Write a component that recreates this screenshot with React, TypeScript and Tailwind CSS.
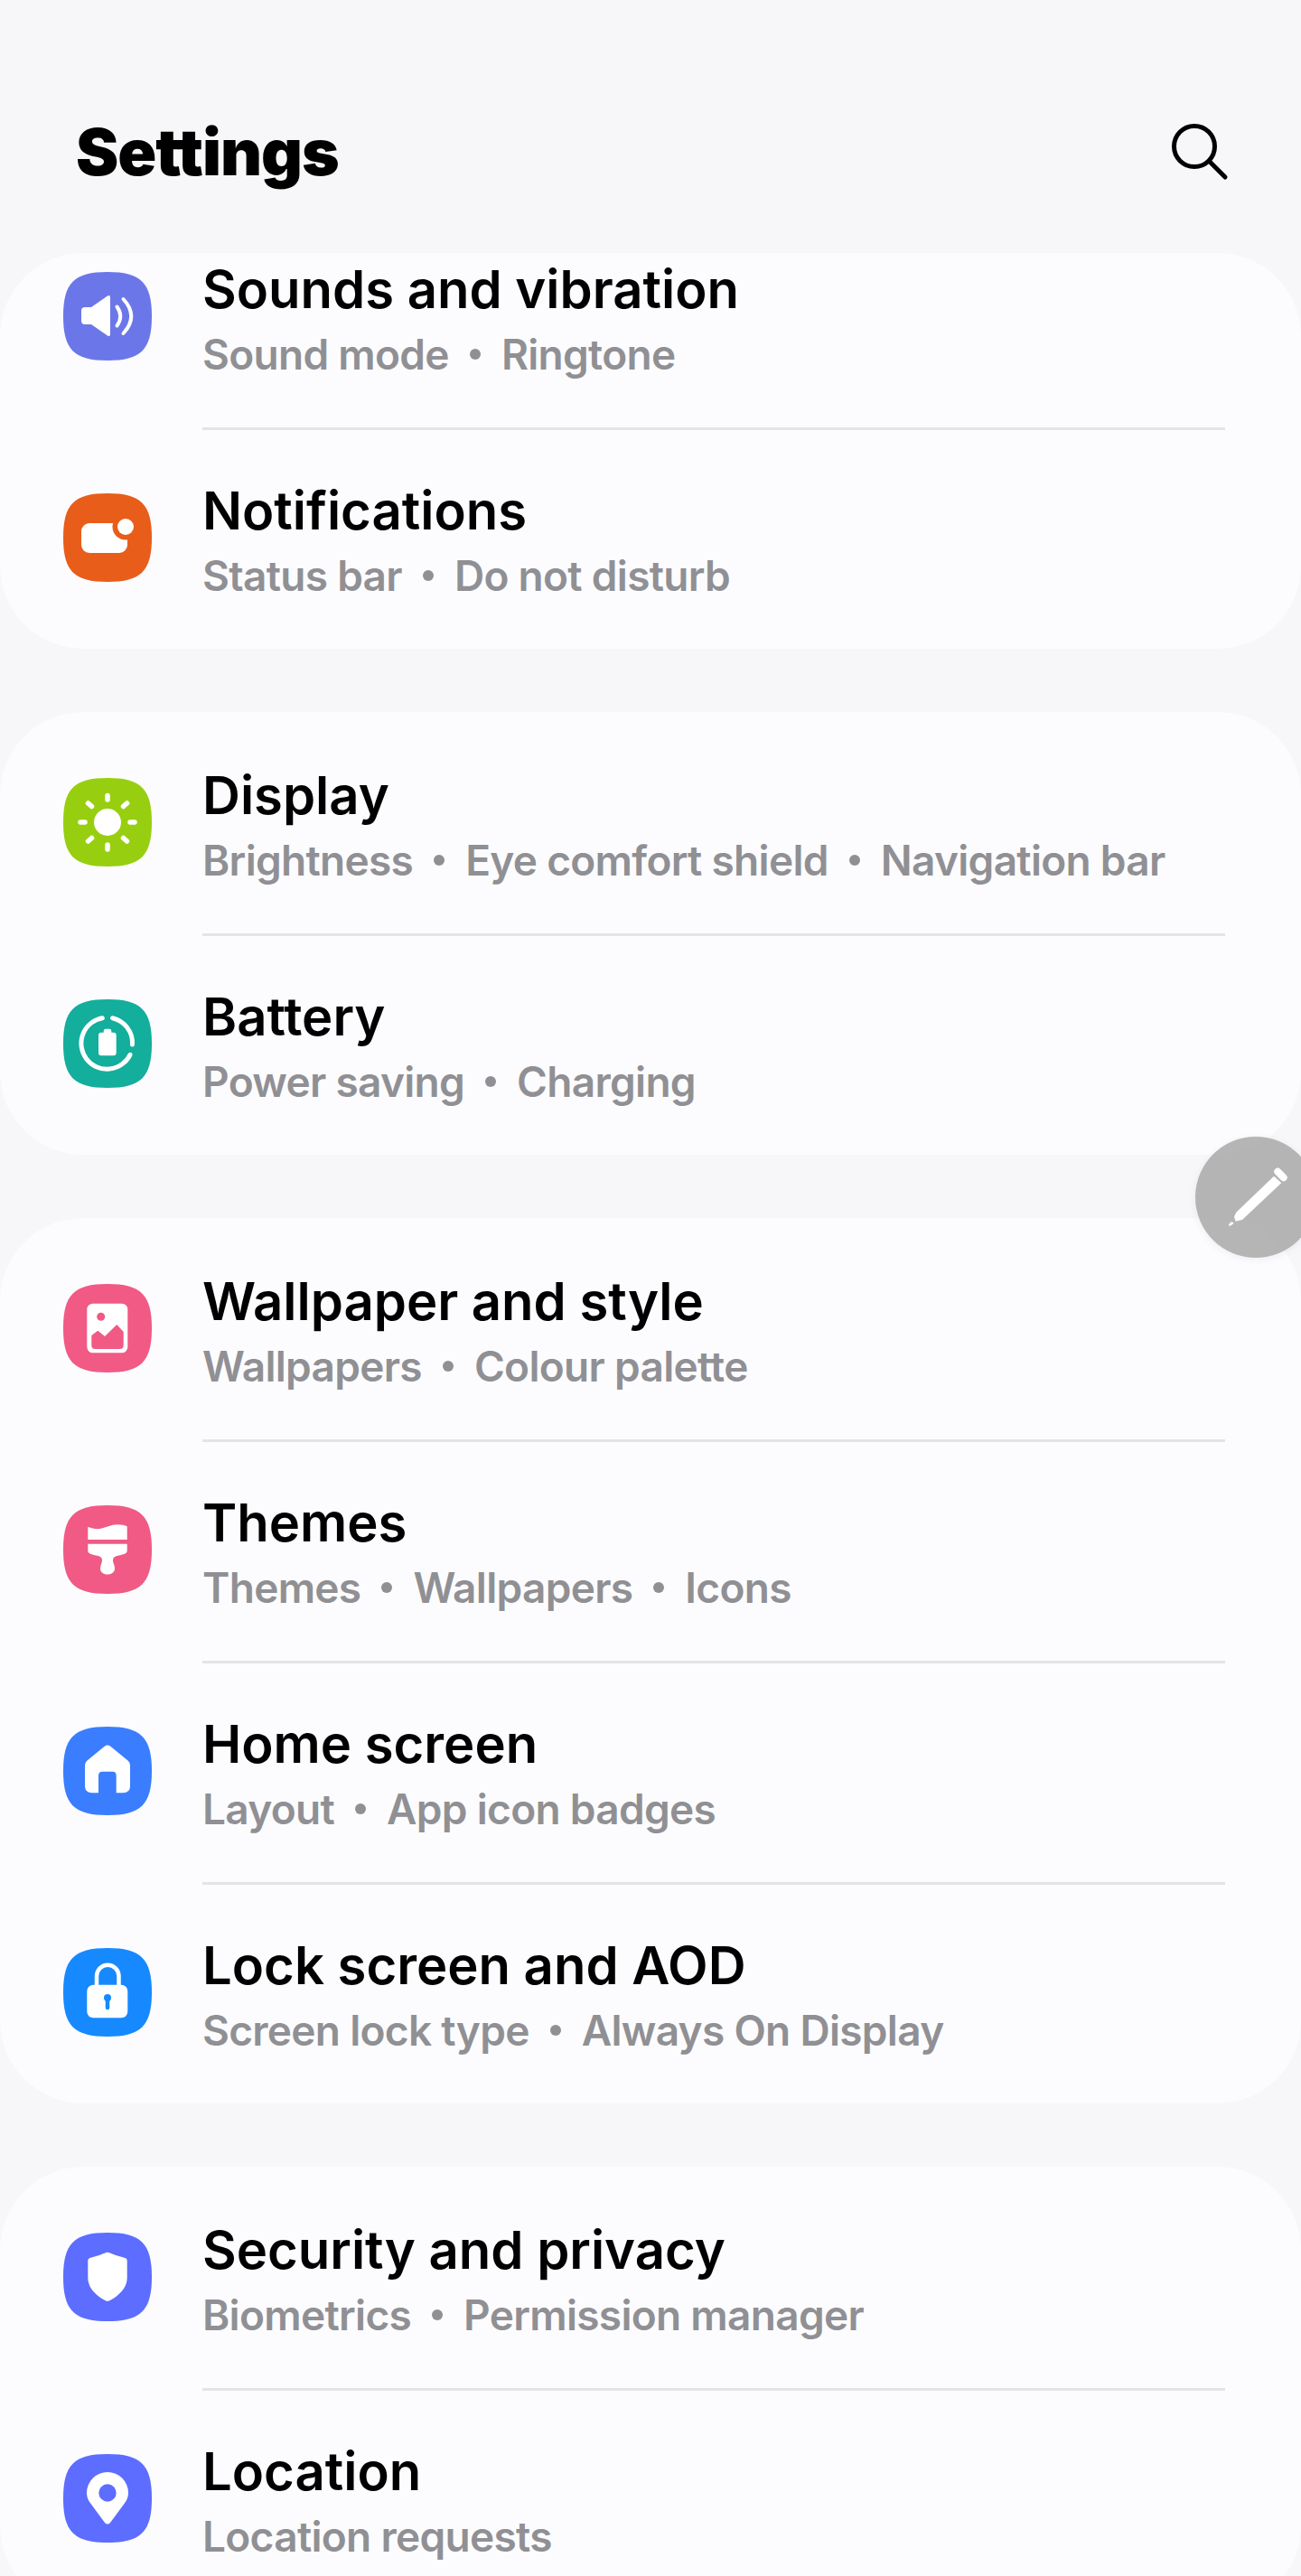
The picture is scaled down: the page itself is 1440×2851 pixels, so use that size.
import type { ReactNode } from 'react';

type Item = { title: string; sub: string[]; color: string; icon: ReactNode };

const Squircle = 'M49 0C86 0 98 12 98 49C98 86 86 98 49 98C12 98 0 86 0 49C0 12 12 0 49 0Z';

const sounds: Item = {
  title: 'Sounds and vibration',
  sub: ['Sound mode', 'Ringtone'],
  color: '#6b77e8',
  icon: (
    <>
      <path d="M24 39H31L49 26.500Q52 25 52 28V69Q52 72 49 70.500L31 58H24Q20 58 20 54V43Q20 39 24 39Z" fill="#fff" />
      <path d="M59.500 38.500Q67 49 59.500 59.500M66.500 30Q84 49 66.500 68" stroke="#fff" strokeWidth="4" strokeLinecap="round" fill="none" />
    </>
  ),
};

const notifications: Item = {
  title: 'Notifications',
  sub: ['Status bar', 'Do not disturb'],
  color: '#e85d19',
  icon: (
    <>
      <rect x="20" y="33" width="51" height="33" rx="9" fill="#fff" />
      <circle cx="69" cy="37" r="14.500" fill="#e85d19" />
      <circle cx="69" cy="37" r="9" fill="#fff" />
    </>
  ),
};

const display: Item = {
  title: 'Display',
  sub: ['Brightness', 'Eye comfort shield', 'Navigation bar'],
  color: '#97cf10',
  icon: (
    <>
      <circle cx="49" cy="49" r="15" fill="#fff" />
      <path
        d="M49 19.500V24M49 74V79M19 49H24M74 49H79M27.500 28L31.500 31.500M70.500 28L66.500 31.500M27.500 70L31.500 66.500M70.500 70L66.500 66.500"
        stroke="#fff"
        strokeWidth="5.500"
        strokeLinecap="round"
        fill="none"
      />
    </>
  ),
};

const battery: Item = {
  title: 'Battery',
  sub: ['Power saving', 'Charging'],
  color: '#13ae9c',
  icon: (
    <>
      <path
        d="M54.600 20.700A28.500 28.500 0 0 1 76.500 50M74 61.300A28.500 28.500 0 1 1 43.300 20.700"
        stroke="#fff"
        strokeWidth="5"
        strokeLinecap="round"
        fill="none"
      />
      <path d="M44.700 36.700V35Q44.700 32.700 47 32.700H51Q53.300 32.700 53.300 35V36.700H55.700Q58.700 36.700 58.700 39.700V59.300Q58.700 62.300 55.700 62.300H42Q39 62.300 39 59.300V39.700Q39 36.700 42 36.700Z" fill="#fff" />
    </>
  ),
};

const wallpaper: Item = {
  title: 'Wallpaper and style',
  sub: ['Wallpapers', 'Colour palette'],
  color: '#f05a85',
  icon: (
    <>
      <rect x="26.300" y="21.700" width="45" height="54.600" rx="6.500" fill="#fff" />
      <circle cx="41.700" cy="36.300" r="4.500" fill="#f05a85" />
      <path d="M31.300 57L38.300 51.700L46 58L59.300 45L66.700 53V68Q66.700 72 62.700 72H35.300Q31.300 72 31.300 68Z" fill="#f05a85" />
    </>
  ),
};

const themes: Item = {
  title: 'Themes',
  sub: ['Themes', 'Wallpapers', 'Icons'],
  color: '#f05a85',
  icon: (
    <>
      <path d="M27.300 24C32 25.500 36 26.500 40 26C47 25 53 21.300 60 21.300C65 21.300 68 22 70.700 23.300V38H27.300Z" fill="#fff" />
      <path d="M27.300 42.700H70.700V50C70.700 53 68 54 64 55C58 56 55 57 55 61C55 64 57 66 57 70C57 74 53.500 76.500 49 76.500C44.500 76.500 41 74 41 70C41 66 43 64 43 61C43 57 40 56 34 55C30 54 27.300 53 27.300 50Z" fill="#fff" />
    </>
  ),
};

const home: Item = {
  title: 'Home screen',
  sub: ['Layout', 'App icon badges'],
  color: '#3a7dff',
  icon: (
    <path d="M46 21.500Q49 19.500 52 21.500L71.500 37.500Q74 39.500 74 43V66Q74 73.300 66 73.300H58.700V54Q58.700 49.700 54.500 49.700H43.500Q39 49.700 39 54V73.300H32Q24 73.300 24 66V43Q24 39.500 26.500 37.500Z" fill="#fff" />
  ),
};

const lock: Item = {
  title: 'Lock screen and AOD',
  sub: ['Screen lock type', 'Always On Display'],
  color: '#1689ff',
  icon: (
    <>
      <path d="M37 42V31A12.250 12.250 0 0 1 61.500 31V42" stroke="#fff" strokeWidth="4.500" fill="none" />
      <rect x="26.300" y="40.700" width="45" height="36.600" rx="7" fill="#fff" />
      <circle cx="49" cy="55" r="4" fill="#1689ff" />
      <path d="M49 56V66" stroke="#1689ff" strokeWidth="4.500" strokeLinecap="round" />
    </>
  ),
};

const security: Item = {
  title: 'Security and privacy',
  sub: ['Biometrics', 'Permission manager'],
  color: '#5d6dff',
  icon: (
    <path d="M47.500 22Q49 21.500 50.500 22Q58 25.500 68.500 28Q70.700 28.500 70.700 31V50C70.700 62 60 71 50.500 75.500Q49 76 47.500 75.500C38 71 27.300 62 27.300 50V31Q27.300 28.500 29.500 28Q40 25.500 47.500 22Z" fill="#fff" />
  ),
};

const location: Item = {
  title: 'Location',
  sub: ['Location requests'],
  color: '#5d6dff',
  icon: (
    <>
      <path d="M49 20A23 23 0 0 1 72 43C72 48 70 52 67.500 55L52 76Q49 79 46 76L30.500 55C28 52 26 48 26 43A23 23 0 0 1 49 20Z" fill="#fff" />
      <circle cx="49" cy="43" r="9.700" fill="#5d6dff" />
    </>
  ),
};

function Row({ item, first }: { item: Item; first: boolean }) {
  return (
    <div className="flex h-[245px] pl-[70px] pr-[84px]">
      <svg viewBox="0 0 98 98" className="w-[98px] h-[98px] mt-[73px] shrink-0 mr-[56px]">
        <path d={Squircle} fill={item.color} />
        {item.icon}
      </svg>
      <div className={`flex-1 pt-[53px] border-t-[3px] ${first ? 'border-transparent' : 'border-[#e4e4e7]'}`}>
        <div className="text-[58px] leading-[72px] font-semibold text-black">{item.title}</div>
        <div className="text-[46px] leading-[72px] font-semibold text-[#909094] tracking-[-0.7px] flex">
          {item.sub.map((s, i) => (
            <span key={s} className="flex items-center">
              {i > 0 && <span className="w-[12px] h-[12px] rounded-full bg-[#909094] mx-[23px]" />}
              {s}
            </span>
          ))}
        </div>
      </div>
    </div>
  );
}

function Card({ items, clip }: { items: Item[]; clip?: boolean }) {
  return (
    <div className="bg-[#fcfcff] rounded-[92px] overflow-hidden">
      <div className={clip ? '-mt-[52px]' : ''}>
        {items.map((it, i) => (
          <Row key={it.title} item={it} first={i === 0} />
        ))}
      </div>
    </div>
  );
}

export default function App() {
  return (
    <div className="relative w-[1440px] h-[2851px] overflow-hidden bg-[#f7f7f9] font-['Inter','Noto_Sans',sans-serif]">
      <header className="flex items-center justify-between h-[280px] pl-[84px] pr-[80px] pt-[56px]">
        <h1 className="text-[71px] font-black text-black tracking-[-1px]">Settings</h1>
        <svg viewBox="0 0 64 64" className="w-[64px] h-[64px]" fill="none" stroke="#000" strokeWidth="5" strokeLinecap="round">
          <circle cx="26" cy="26" r="22.500" />
          <path d="M42.500 42.500L60 60" />
        </svg>
      </header>

      <div className="flex flex-col gap-[70px]">
        <Card items={[sounds, notifications]} clip />
        <Card items={[display, battery]} />
        <Card items={[wallpaper, themes, home, lock]} />
        <Card items={[security, location]} />
      </div>

      <div className="absolute left-[1323px] top-[1258px] w-[134px] h-[134px] rounded-full bg-[#a3a3a3]/80 shadow-[0_2px_10px_rgba(0,0,0,0.06)]">
        <svg viewBox="0 0 134 134" className="w-full h-full">
          <path d="M91.300 38.700L97.700 45.300" stroke="#fff" strokeWidth="8" strokeLinecap="round" />
          <path d="M87 43.700L95.300 51.300L52 92L44.700 93.700L43 88.700L45.300 83.700Z" fill="#fff" />
          <path d="M40.300 94L42.700 96L37.700 99.300L37 97Z" fill="#fff" />
        </svg>
      </div>
    </div>
  );
}
